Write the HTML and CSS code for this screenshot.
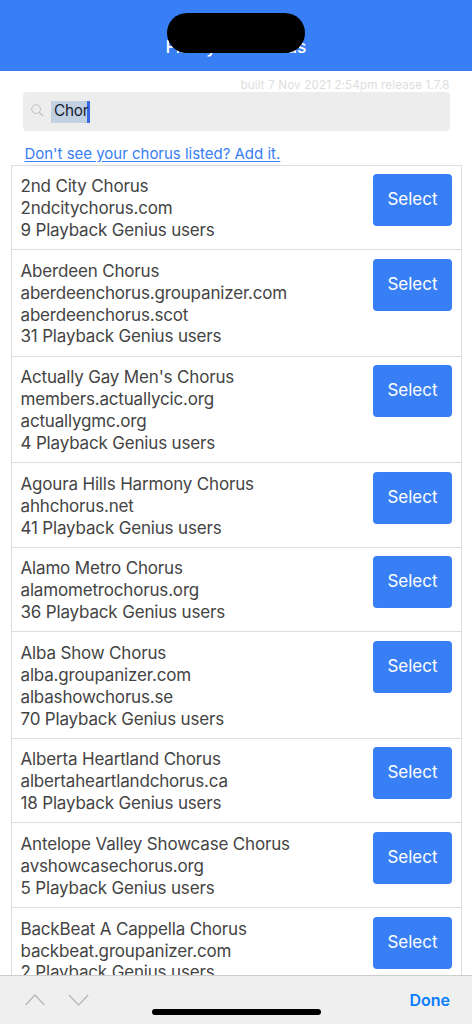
FILE: index.html
```html
<!DOCTYPE html>
<html lang="en">
<head>
<meta charset="utf-8">
<title>Find your chorus</title>
<link rel="stylesheet" href="styles.css">
</head>
<body>
<div class="app">
  <header class="bar">
    <h1 class="title">Find your chorus</h1>
    <div class="island"></div>
  </header>
  <main class="content">
    <p class="build">built 7 Nov 2021 2:54pm release 1.7.8</p>
    <div class="search">
      <svg class="search-icon" width="13" height="13" viewBox="0 0 13 13" fill="none" stroke="#bdbdbd"><circle cx="5.1" cy="5.1" r="4.4" stroke-width="0.9"/><path d="M8.3 8.3 12 12" stroke-width="1.2"/></svg>
      <span class="query">Chor</span>
    </div>
    <a class="add">Don't see your chorus listed? Add it.</a>
    <ul class="list">
      <li class="row"><div class="info"><p>2nd City Chorus</p><p>2ndcitychorus.com</p><p>9 Playback Genius users</p></div><button class="select">Select</button></li>
      <li class="row"><div class="info"><p>Aberdeen Chorus</p><p>aberdeenchorus.groupanizer.com</p><p>aberdeenchorus.scot</p><p>31 Playback Genius users</p></div><button class="select">Select</button></li>
      <li class="row"><div class="info"><p>Actually Gay Men's Chorus</p><p>members.actuallycic.org</p><p>actuallygmc.org</p><p>4 Playback Genius users</p></div><button class="select">Select</button></li>
      <li class="row"><div class="info"><p>Agoura Hills Harmony Chorus</p><p>ahhchorus.net</p><p>41 Playback Genius users</p></div><button class="select">Select</button></li>
      <li class="row"><div class="info"><p>Alamo Metro Chorus</p><p>alamometrochorus.org</p><p>36 Playback Genius users</p></div><button class="select">Select</button></li>
      <li class="row"><div class="info"><p>Alba Show Chorus</p><p>alba.groupanizer.com</p><p>albashowchorus.se</p><p>70 Playback Genius users</p></div><button class="select">Select</button></li>
      <li class="row"><div class="info"><p>Alberta Heartland Chorus</p><p>albertaheartlandchorus.ca</p><p>18 Playback Genius users</p></div><button class="select">Select</button></li>
      <li class="row"><div class="info"><p>Antelope Valley Showcase Chorus</p><p>avshowcasechorus.org</p><p>5 Playback Genius users</p></div><button class="select">Select</button></li>
      <li class="row"><div class="info"><p>BackBeat A Cappella Chorus</p><p>backbeat.groupanizer.com</p><p>2 Playback Genius users</p></div><button class="select">Select</button></li>
    </ul>
  </main>
  <footer class="accessory">
    <svg class="arrows" width="64" height="14" viewBox="0 0 64 14" fill="none" stroke="#b9b9b9" stroke-width="1.4"><path d="M.6 12 10 2l9.400 10M44 2l9.600 10L63.200 2"/></svg>
    <span class="done">Done</span>
    <div class="home"></div>
  </footer>
</div>
</body>
</html>
```
FILE: styles.css
```css
* { box-sizing: border-box; }
body, h1, p, ul { margin: 0; padding: 0; }
body { font-family: Inter, "Liberation Sans", sans-serif; background: #fff; color: #444; }
.app { height: 1024px; display: flex; flex-direction: column; overflow: hidden; }
.bar { position: relative; flex: none; height: 71px; background: #387ef5; border-bottom: 1px solid #3d7eed; display: flex; justify-content: center; align-items: flex-start; padding-top: 35px; }
.title { font-size: 17.500px; line-height: 24px; font-weight: 500; color: #fff; white-space: nowrap; }
.island { position: absolute; left: 167px; top: 12.500px; width: 138px; height: 40.500px; border-radius: 21px; background: #000; }
.content { flex: 1; min-height: 0; overflow: hidden; display: flex; flex-direction: column; padding: 7px 10.500px 0; }
.build { flex: none; align-self: flex-end; margin-right: 12px; height: 15px; font-size: 11.700px; letter-spacing: 0.110px; line-height: 15px; color: #ddd; white-space: nowrap; }
.search { flex: none; margin: -1px 12px 0; height: 39px; border-radius: 4px; background: #ededed; display: flex; align-items: flex-start; padding: 8.500px 0 0 8.500px; }
.search-icon { margin-top: 3.500px; }
.query { margin-left: 7px; width: 39px; height: 22px; line-height: 20px; padding-left: 3px; font-size: 15.300px; letter-spacing: -0.200px; color: #13202e; background: #c2d1e1; border-right: 3px solid #3a65e3; white-space: nowrap; }
.add { flex: none; align-self: flex-start; margin: 13px 0 0 14px; height: 20px; font-size: 15px; line-height: 19px; letter-spacing: -0.020px; color: #387ef5; text-decoration: underline; text-underline-offset: 2px; white-space: nowrap; }
.list { flex: none; list-style: none; border: 1px solid #ddd; margin-top: 0.500px; }
.row { display: flex; justify-content: space-between; align-items: flex-start; padding: 8.700px 8.500px 7.300px 9px; border-bottom: 1px solid #ddd; }
.info { padding-top: 2px; font-size: 17px; letter-spacing: -0.170px; line-height: 21.870px; white-space: nowrap; }
.select { flex: none; width: 79px; height: 52px; padding: 0 0 2px; border: 0; border-radius: 4px; background: #387ef5; color: #fff; font: 17px/48px Inter, "Liberation Sans", sans-serif; }
.accessory { position: relative; flex: none; height: 49px; background: #efefef; border-top: 1px solid #ccc; display: flex; justify-content: space-between; align-items: flex-start; padding: 17px 22px 0 25px; }
.done { margin-top: -1px; font-size: 16px; line-height: 16px; font-weight: 600; color: #087cff; }
.home { position: absolute; left: 151.500px; top: 33px; width: 169px; height: 6px; border-radius: 3px; background: #000; }
```
